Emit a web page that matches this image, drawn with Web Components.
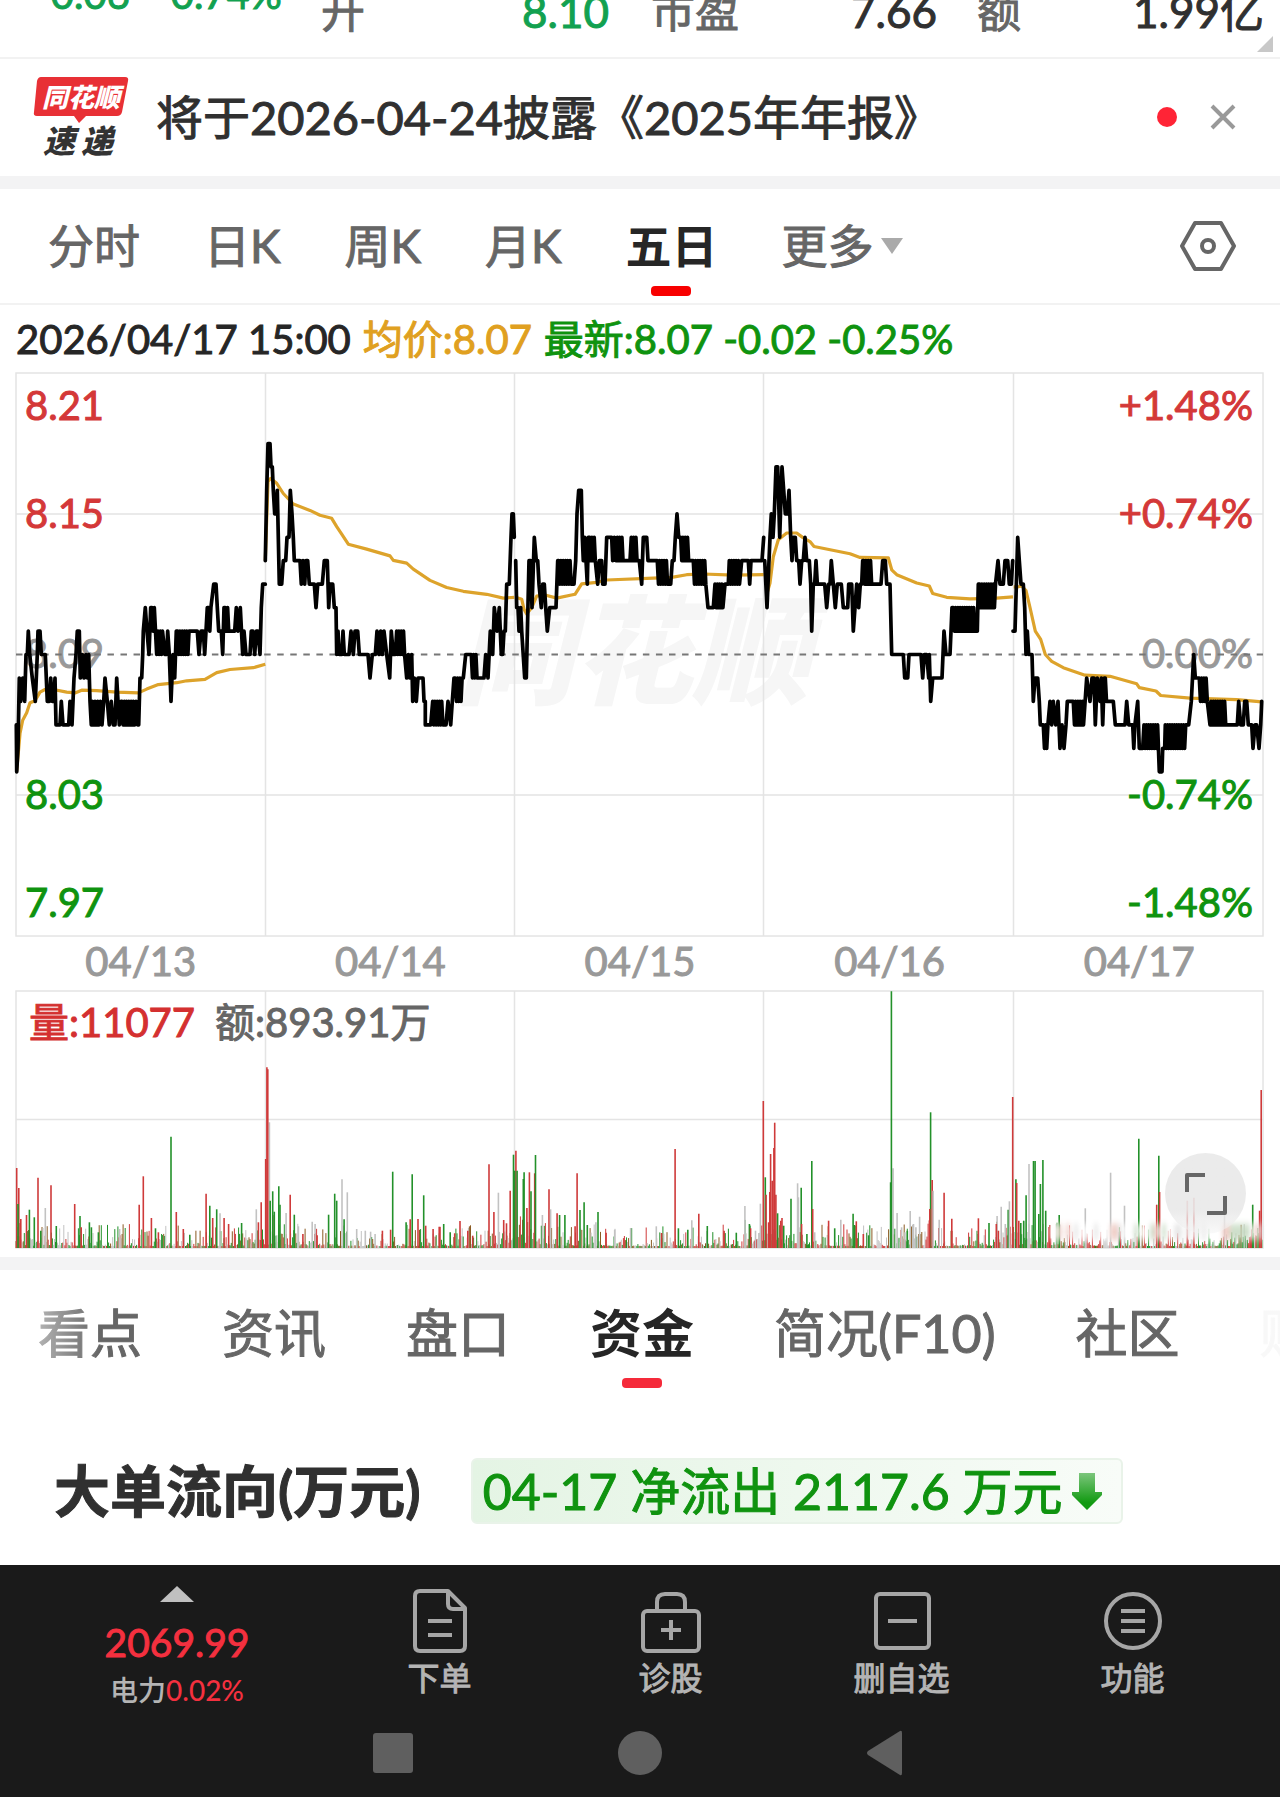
<!DOCTYPE html>
<html lang="zh-CN">
<head>
<meta charset="utf-8">
<meta name="viewport" content="width=device-width, initial-scale=1">
<title>五日 行情</title>
<style>
  html, body { margin: 0; background: #fff; }
  body { font-family: Lato, "Noto Sans CJK SC", sans-serif; font-weight: 400; -webkit-text-stroke-width: 1px; color: #303030; overflow-x: hidden; }
</style>
</head>
<body>
<stock-page></stock-page>

<script>
const define = (name, html, setup) => customElements.define(name, class extends HTMLElement {
  constructor() {
    super();
    const t = document.createElement('template');
    t.innerHTML = html;
    this.attachShadow({ mode: 'open' }).appendChild(t.content.cloneNode(true));
  }
  connectedCallback() { if (setup) setup(this, this.shadowRoot); }
});

const BASE = `*{box-sizing:border-box} button{font:inherit;color:inherit;background:none;border:0;padding:0;margin:0;white-space:nowrap;cursor:pointer} svg{display:block}`;

/* ---------- quote strip, scrolled partly out of view ---------- */
define('quote-strip', `<style>${BASE}
:host{display:block;height:57px;overflow:hidden;border-bottom:2px solid #f2f2f2;position:relative}
.row{display:flex;align-items:baseline;margin-top:-19px;height:60px;line-height:60px;font-size:44px;padding:0 16px 0 36px;white-space:nowrap}
.chg{font-size:40px;color:#12a150;display:flex;gap:26px;width:285px;margin-top:-17px;align-self:flex-start}
.cell{display:flex;justify-content:space-between}
.k{color:#666}.g{color:#12a150}
.a{width:288px}.b{width:286px;margin-left:42px}.c{flex:1;margin-left:40px}
svg{position:absolute;right:7px;top:36px}
</style>
<div class="row"><div class="chg"><span>-0.06</span><span>-0.74%</span></div>
<div class="cell a"><span class="k">开</span><span class="g">8.10</span></div>
<div class="cell b"><span class="k">市盈</span><span>7.66</span></div>
<div class="cell c"><span class="k">额</span><span>1.99亿</span></div></div>
<svg width="16" height="16" aria-hidden="true"><path d="M16 0V16H0Z" fill="#c8c8c8"/></svg>`);

/* ---------- news line ---------- */
define('news-line', `<style>${BASE}
:host{display:flex;align-items:center;height:115px;padding:0 43px 2px 32px;font-size:47px;line-height:60px;color:#303030}
.t{margin-left:26px;flex:1;white-space:nowrap}
.logo{-webkit-text-stroke-width:0}
.dot{width:20px;height:20px;border-radius:50%;background:#ff2436;margin-right:32px}
</style>
<svg class="logo" width="98" height="82" viewBox="0 0 98 82" role="img" aria-label="同花顺速递">
<path d="M9 1H93Q97 1 96 5L90 36Q89 40 85 40H54L47 47L42 40H5Q1 40 2 36L5 5Q6 1 9 1Z" fill="#e83035"/>
<text x="10" y="31" font-family="Noto Sans CJK SC" font-size="26" font-weight="900" font-style="italic" fill="#fff">同花顺</text>
<text y="77" font-family="Noto Sans CJK SC" font-size="32" font-weight="900" font-style="italic" fill="#333"><tspan x="11">速</tspan><tspan x="49">递</tspan></text>
</svg>
<span class="t"><slot></slot></span><span class="dot"></span>
<button aria-label="关闭"><svg width="28" height="28" viewBox="0 0 28 28"><path d="M3 3L25 25M25 3L3 25" stroke="#999" stroke-width="4"/></svg></button>`);

/* ---------- period tabs ---------- */
define('period-tabs', `<style>${BASE}
:host{display:flex;align-items:center;height:114px;padding:0 44px 0 48px;border-bottom:2px solid #f2f2f2;color:#666;font-size:46px;line-height:60px}
nav{display:flex;gap:64px;flex:1}
button{position:relative;display:flex;align-items:center;gap:8px}
.on{color:#262626;font-weight:700;-webkit-text-stroke-width:0}
.on::after{content:"";position:absolute;left:calc(50% - 20px);top:70px;width:40px;height:10px;border-radius:4px;background:#f80000}
</style>
<nav><button>分时</button><button>日K</button><button>周K</button><button>月K</button><button class="on" aria-current="true">五日</button>
<button>更多<svg width="22" height="16"><path d="M0 0H22L11 16Z" fill="#aaa"/></svg></button></nav>
<button aria-label="设置"><svg width="56" height="50" viewBox="0 0 56 50" fill="none" stroke="#666" stroke-width="4" stroke-linejoin="round"><path d="M15 2H41L54 25L41 48H15L2 25Z"/><circle cx="28" cy="25" r="6"/></svg></button>`);

/* ---------- cursor readout ---------- */
define('cursor-readout', `<style>${BASE}
:host{display:flex;gap:12px;align-items:center;height:68px;padding:0 16px;font-size:40px;line-height:58px;white-space:nowrap;color:#262626}
.y{color:#e0a020}.g{color:#0f930f}
</style>
<span>2026/04/17 15:00</span><span class="y">均价:8.07</span><span class="g">最新:8.07 -0.02 -0.25%</span>`);

/* ---------- price chart ----------
   Each day: "x,level" pairs; level is cents away from the previous close.
   "z a b lo hi" is a stretch that flips between two levels. x is in thirds of a pixel. */
const DAYS = [
`49,-3 50,-5 54,-4 58,-1 62,-2 68,-1 74,-2 78,0 82,0 85,1 89,0 97,-1 106,-2 112,0 114,1 120,1 124,0 136,0 142,-2 148,-2 152,-1 157,-2 161,-2 165,-1 168,-3 180,-3 184,-2 189,-3 206,-3 210,-2 216,-3 222,-1 228,0 232,1 238,1 241,-1 247,0 252,-1 258,0 262,-1 266,0 270,-2 274,-3 277,-2 281,-3 285,-2 289,-3 293,-2 297,-3 301,-2 306,-3 311,-2 315,-1 322,-2 328,-3 334,-2 340,-3 345,-3 350,-1 358,-3 363,-2 z:366:400:-3:-2 404,-3 408,-2 413,-3 416,-3 420,-1 425,-1 428,0 430,1 436,2 441,1 447,0 452,2 z:456:466:1:2 470,0 z:474:490:0:1 495,0 500,0 503,1 508,0 513,-2 519,0 524,-1 529,1 z:533:570:0:1 574,1 592,1 597,0 603,1 610,1 614,0 622,2 z:626:636:1:2 641,3 648,3 652,2 656,1 664,1 668,0 672,2 z:676:688:1:2 692,1 704,1 709,2 714,1 721,2 728,0 732,1 738,0 750,0 754,1 759,1 764,0 769,1 774,1 780,0 784,2 788,3 796,3`,
`796,4 800,7 804,9 810,9 813,8 817,8 820,7 824,6 828,6 832,7 838,3 845,3 850,4 857,4 861,5 867,5 871,7 876,6 880,5 883,4 900,4 904,3 909,4 914,3 918,4 923,4 928,3 943,3 948,2 953,3 967,3 973,4 982,4 986,2 990,3 998,3 1003,2 1008,2 1010,0 1014,1 1018,0 1026,0 1029,1 1033,0 1047,0 1053,1 1060,0 1065,1 1073,1 1078,0 1104,0 1110,-1 1117,0 1126,0 1131,1 1137,0 1142,1 1147,0 1152,1 1160,0 1169,-1 1174,1 1180,0 1186,0 z:1190:1214:0:1 1220,-1 1225,0 1229,-1 1235,0 1238,-2 1243,-1 1249,-2 1254,-1 1269,-1 1272,-2 1276,-2 1276,-3 1292,-3 z:1298:1330:-3:-2 1338,-3 1344,-2 1352,-3 1357,-2 1362,-1 z:1366:1388:-2:-1 1390,-1 1397,0 1410,0 z:1414:1432:-1:0 1436,-1 1452,-1 1457,0 1464,-1 1471,1 1478,0 1483,2 1491,1 1498,2 1504,0 1508,0 1512,1 1516,1 1520,3 1528,3 1533,5 1536,6 1540,6 1543,5`,
`1547,4 1550,2 1554,2 1557,1 1562,2 1565,1 1574,-1 1579,-1 1587,4 1592,4 1596,2 1603,5 1609,4 1613,4 1617,3 1624,2 1628,3 1633,3 1637,2 1642,1 1649,2 1668,2 1673,4 z:1676:1714:3:4 1722,3 1727,4 1731,6 1736,7 1744,7 1747,5 1750,4 1754,5 1758,4 1762,3 1765,5 z:1769:1788:4:5 1793,3 1798,4 1805,4 1808,3 1815,3 1820,5 1835,5 1838,4 1843,5 1848,4 z:1852:1870:4:5 1875,4 1890,4 z:1894:1914:4:5 1918,4 1925,3 1930,5 1940,5 1944,4 1968,4 z:1972:2004:3:4 2012,3 2017,4 2022,4 2026,5 2031,6 2036,5 z:2042:2068:4:5 2075,4 z:2080:2118:3:4 2124,2 2140,2 z:2145:2170:2:3 2175,3 2185,3 z:2188:2220:3:4 2225,4 2245,4 2249,3 2253,4 2286,4 2291,5`,
`2294,4 2301,2 2310,5 2314,6 2319,5 2323,6 2328,8 2333,8 2339,5 2346,8 2351,7 2356,6 2362,6 2367,7 2372,5 2376,4 2380,5 2386,5 2390,4 2396,4 2400,3 2405,4 2410,4 2415,5 2420,4 2428,4 2432,3 2435,1 2440,3 2444,3 2448,4 2452,3 2474,3 2480,2 2486,3 2490,3 2494,4 2500,3 2506,2 2512,3 2518,3 2524,3 2530,2 2543,2 2546,3 2555,3 2560,1 2565,2 2570,3 2576,2 2581,3 2585,3 2588,4 z:2591:2616:3:4 2625,3 2643,3 2648,4 2656,4 2660,3 2670,3 2675,0 2710,0 2714,-1 2723,-1 2727,0 2763,0 2768,-1 2773,0 2780,0 2786,-1 2788,0 2792,-2 2798,-1 2826,-1 2832,1 2838,0 2850,0 2856,2 z:2860:2928:1:2 2932,1 2935,3 z:2939:2990:2:3 2994,4 3000,3 3010,3 3015,4 3023,4 3028,3 3034,3 3038,4`,
`3039,1 3045,1 3053,5 3058,4 3063,3 3070,3 3074,2 3078,0 3082,1 3086,0 3096,0 3100,-2 3105,-1 3113,-1 3118,-2 3121,-3 3126,-3 z:3130:3146:-4:-3 3150,-2 3155,-3 3160,-2 3167,-3 3174,-2 3180,-4 3186,-3 3192,-4 3198,-3 3202,-2 3217,-2 z:3220:3254:-3:-2 3260,-1 3270,-2 3276,-1 3282,-1 3286,-3 3292,-1 3300,-2 3304,-1 3308,-3 3313,-1 z:3316:3322:-2:-1 3326,-2 3340,-2 3346,-3 3375,-3 3380,-2 3386,-3 3395,-3 z:3398:3408:-4:-3 3413,-2 3418,-4 3428,-4 z:3432:3474:-4:-3 3478,-5 3486,-5 3488,-4 3494,-4 z:3496:3560:-4:-3 3566,-3 3574,-2 3581,0 3586,-1 3595,-1 z:3598:3624:-2:-1 3630,-3 z:3633:3678:-3:-2 3684,-3 3712,-3 3716,-2 3722,-3 3730,-3 3734,-2 3740,-2 3745,-3 3755,-3 3759,-4 3765,-3 3770,-3 3777,-4 3782,-3 3785,-2`];
const AVGS = [
'50,1090 60,990 68,955 80,935 90,908 105,903 120,880 135,873 160,873 200,880 225,882 245,875 290,876 350,880 415,882 440,872 475,860 530,855 560,850 615,846 650,828 690,820 760,815 796,806',
'796,530 804,320 812,312 830,325 850,352 880,380 930,397 960,410 995,418 1010,440 1025,460 1045,487 1100,500 1170,518 1180,530 1220,537 1240,553 1260,565 1290,583 1340,602 1390,612 1460,620 1510,630 1543,628',
'1547,628 1565,633 1572,660 1580,672 1595,655 1610,625 1635,622 1670,630 1725,620 1745,592 1790,588 1820,582 1960,577 2015,575 2060,568 2110,566 2200,569 2291,568',
'2300,620 2310,590 2320,520 2335,475 2360,457 2390,457 2410,470 2430,480 2442,493 2550,512 2580,522 2665,523 2675,555 2690,568 2750,590 2788,598 2798,618 2840,628 2910,632 2980,631 3039,627',
'3041,600 3055,600 3065,598 3078,610 3090,655 3106,718 3122,740 3136,780 3155,798 3190,815 3255,835 3330,838 3410,858 3418,868 3468,877 3482,889 3570,896 3710,900 3785,906'];
const r1 = v => Math.round(v * 10) / 10;
const pricePath = s => {
  const pts = [];
  for (const tok of s.split(' ')) {
    if (tok[0] === 'z') {
      const [, a, b, lo, hi] = tok.split(':').map(Number);
      let up = true;
      for (let x = a; x <= b; x += 3.4) { pts.push([x, up ? hi : lo]); up = !up; }
    } else pts.push(tok.split(',').map(Number));
  }
  return pts.map(([x, n]) => r1(x / 3 - 16) + ',' + r1(281.5 - 23.45 * n)).join(' ');
};
const avgPath = s => s.split(' ').map(p => { const [x, y] = p.split(',').map(Number); return r1(x / 3 - 16) + ',' + r1(y / 2.6576 - 12); }).join(' ');
const vlines = h => [249, 498, 747, 997].map(x => `<path d="M${x + .5} 0V${h}"/>`).join('');

define('price-chart', `<style>${BASE}
:host{display:block;padding:0 16px} svg{width:100%;height:auto;overflow:visible}
.l{font-size:40px}
.up{fill:#d43838;stroke:#d43838}.dn{fill:#0f930f;stroke:#0f930f}.eq{fill:#999;stroke:#999}.l{stroke-width:1px}.e{text-anchor:end}
.wm{font:italic 900 118px "Noto Sans CJK SC";fill:#f6f6f6;-webkit-text-stroke-width:0}
</style><svg viewBox="0 0 1248 564" role="img" aria-label="五日价格走势"></svg>`, (h, root) => {
  const lab = (y, a, b, c) => `<text class="l ${c}" x="9" y="${y}">${a}</text><text class="l ${c} e" x="1237" y="${y}">${b}</text>`;
  root.querySelector('svg').innerHTML =
  `<text class="wm" x="440" y="322">同花顺</text>
   <g fill="none" stroke="#e4e4e4" stroke-width="1.500"><rect x="0" y="0" width="1247" height="563"/><path d="M0 141H1247M0 422H1247"/>${vlines(563)}</g>
   ${lab(47, '8.21', '+1.48%', 'up')}${lab(155, '8.15', '+0.74%', 'up')}${lab(295, '8.09', '0.00%', 'eq')}${lab(436, '8.03', '-0.74%', 'dn')}${lab(544, '7.97', '-1.48%', 'dn')}
   <path d="M0 281.5H1247" stroke="#777" stroke-width="2" stroke-dasharray="6.500 6.560"/>
   <g fill="none" stroke="#dda32b" stroke-width="3.200" stroke-linejoin="round">${AVGS.map(s => `<polyline points="${avgPath(s)}"/>`).join('')}</g>
   <g fill="none" stroke="#000" stroke-width="3.700" stroke-linejoin="round" stroke-linecap="round">${DAYS.map(s => `<polyline points="${pricePath(s)}"/>`).join('')}</g>`;
});

define('date-axis', `<style>${BASE}
:host{display:flex;padding:0 16px;height:54px;line-height:48px;font-size:40px;color:#999}
span{flex:1;text-align:center}</style>
<span>04/13</span><span>04/14</span><span>04/15</span><span>04/16</span><span>04/17</span>`);

/* ---------- volume chart: colour, x (in 1/2.45 px), top (in thirds of a pixel, floor 952) ---------- */
const VOL = `r41,712 r46,772 g44,820 r51,865 g72,837 r65,853 g84,860 r93,741 r125,764 n111,832 g100,900 g138,886 r183,820 g196,856 r199,890 g219,875 g224,890 g241,905 n293,895 r341,822 r351,737 r371,862 g419,618 r432,844 g381,893 r388,905 r449,895 g465,912 r505,789 g514,825 r521,862 g531,836 n539,848 r549,862 r560,880 g592,877 n628,836 r640,815 r633,875 n660,575 r651,685 r654,410 r656,416 g662,810 g668,782 g672,843 g683,767 g686,822 n701,847 r711,792 g721,852 n731,887 n765,873 n772,880 r742,910 r777,914 g805,852 g820,789 g825,810 n838,746 g843,866 n851,785 n874,895 n895,900 n908,903 n919,910 r937,900 r957,897 g962,723 g995,875 r1005,866 g1010,731 r1024,865 g1038,794 r1043,885 r1061,895 r1076,888 g1087,880 g1103,905 r1114,908 r1127,871 r1146,900 r1158,915 r1198,701 r1210,844 n1221,786 r1234,868 r1241,878 r1250,780 g1258,672 r1264,660 g1261,720 g1267,720 g1282,745 g1284,725 r1291,832 r1297,725 g1301,782 r1310,728 g1312,673 g1327,885 n1329,853 r1345,776 n1349,836 r1365,848 g1371,853 g1384,853 r1414,728 r1409,887 g1421,838 g1431,815 g1439,883 g1465,844 n1460,875 r1485,906 n1506,897 n1545,892 n1608,887 r1621,907 r1654,655 g1662,893 n1695,869 r1712,849 g1685,897 g1733,886 r1774,900 g1804,906 n1825,826 g1836,880 r1839,893 n1851,900 n1863,819 r1870,511 g1875,740 r1877,792 r1883,875 r1886,784 r1888,670 r1892,750 r1896,652 r1898,576 r1901,792 g1905,848 r1913,870 r1916,862 g1920,885 g1938,804 n1954,758 n1956,800 g1963,771 r1964,880 g1977,910 g1989,691 r1991,835 n1996,905 r2030,870 g2045,893 n2060,867 g2090,849 g2093,883 r2098,872 r2115,910 g2128,914 n2188,713 g2184,182 g2182,755 n2198,847 n2230,841 n2209,890 n2217,905 n2238,880 n2244,890 n2253,858 g2223,900 g2280,545 r2278,835 r2284,748 n2286,780 n2301,867 r2313,786 r2332,864 r2397,863 g2423,877 n2443,856 r2441,880 r2446,900 n2453,828 n2463,880 g2470,837 n2473,812 r2481,499 g2489,746 r2491,757 r2496,870 g2501,877 g2508,870 g2514,794 n2521,700 g2532,691 g2536,691 g2545,850 g2549,760 g2555,688 g2562,840 r2572,883 g2595,853 n2659,833 n2721,726 n2755,825 g2790,624 g2839,675 r2841,784 r2834,822 r2909,810 r2925,801 g3069,822 r3086,840 r3090,478 n3000,850`;
define('volume-chart', `<style>${BASE}
:host{display:block;padding:0 16px;position:relative} svg.c{width:100%;height:auto;overflow:visible}
text{font-size:40px;stroke-width:1px}
button{position:absolute;right:34px;bottom:14px;width:81px;height:81px;border-radius:50%;background:linear-gradient(#e9e9e9e8 70%,#f4f4f480);display:flex;align-items:center;justify-content:center}
</style><svg class="c" viewBox="0 0 1248 257" role="img" aria-label="五日成交量"></svg>
<button aria-label="全屏"><svg width="42" height="42" viewBox="0 0 42 42" fill="none" stroke="#666" stroke-width="4" stroke-linejoin="round"><path d="M2 19V2H20M40 23V40H22"/></svg></button>`, (h, root) => {
  const C = { r: '#cf3a3a', g: '#23912a', n: '#c2c2c2', b: '#8a5a22' };
  let seed = 17;
  const rnd = () => (seed = (seed * 16807) % 2147483647) / 2147483647;
  const bars = VOL.split(' ').map(t => { const [x, y] = t.slice(1).split(',').map(Number); return [t[0], x / 2.45 - 16, (952 - y) / 3]; });
  let out = '';
  for (let x = 0; x < 1246; x += 1.04) {
    const d = (x % 249.3) / 249.3;
    const crowd = Math.exp(-d * 14) * 26 + (x > 1215 ? 6 : 0) + (x > 880 && x < 915 ? 14 : 0) + (d > .92 ? 10 : 0);
    const v = 2 + Math.pow(rnd(), 4) * 22 + crowd * rnd() * .8;
    const k = rnd(), c = k < .3 ? 'n' : k < .55 ? 'r' : k < .8 ? 'g' : 'b';
    out += `<path stroke="${C[c]}" d="M${r1(x)} 257v${-r1(v)}"/>`;
  }
  for (const [c, x, v] of bars) out += `<path stroke="${C[c]}" stroke-width="1.600" d="M${r1(x)} 257v${-r1(v)}"/>`;
  let haze = '';
  for (let x = 1034; x < 1246; x += 4) {
    const k = rnd();
    haze += `<rect x="${x}" y="233" width="4" height="16" fill="${k < .5 ? '#fff' : k < .66 ? '#ecc4bc' : k < .84 ? '#c2d8be' : '#e2e2e2'}"/>`;
  }
  root.querySelector('svg').innerHTML =
  `<defs><filter id="b" x="-5%" width="110%" y="-50%" height="200%"><feGaussianBlur stdDeviation="2 3"/></filter></defs>
   <g fill="none" stroke="#e4e4e4" stroke-width="1.500"><rect x="0" y="0" width="1247" height="257"/><path d="M0 128.500H1247"/>${vlines(257)}</g>
   <g stroke-width="1">${out}</g><g filter="url(#b)" opacity=".8">${haze}</g>
   <text x="13" y="46" fill="#d43030" stroke="#d43030">量:11077</text><text x="199" y="46" fill="#666" stroke="#666">额:893.91万</text>`;
});

/* ---------- section tabs ---------- */
define('section-tabs', `<style>${BASE}
:host{display:block;overflow:hidden;height:157px;color:#666;font-size:52px;line-height:70px;position:relative}
nav{display:flex;gap:80px;padding:28px 0 0 38px}
button{position:relative;flex:none}
.on{color:#262626;font-weight:700;-webkit-text-stroke-width:0}
.on::after{content:"";position:absolute;left:calc(50% - 20px);top:80px;width:40px;height:10px;border-radius:4px;background:#f52a3a}
:host::before,:host::after{content:"";position:absolute;z-index:1;top:0;height:110px;pointer-events:none}
:host::before{left:0;width:100px;background:linear-gradient(90deg,#ffffff90 30%,#fff0)}
:host::after{right:0;width:70px;background:linear-gradient(270deg,#fffffff4 50%,#fff0)}
</style>
<nav><button>看点</button><button>资讯</button><button>盘口</button><button class="on" aria-current="true">资金</button><button>简况(F10)</button><button>社区</button><button>财务</button></nav>`);

/* ---------- flow heading ---------- */
define('flow-heading', `<style>${BASE}
:host{display:flex;align-items:center;gap:50px;height:127px;padding:0 54px 11px;white-space:nowrap}
h2{margin:0;font-size:56px;line-height:72px;font-weight:700;color:#303030}
.badge{display:flex;align-items:center;gap:8px;height:66px;padding:0 18px 0 10px;border:2px solid #e9f3e9;border-radius:6px;background:linear-gradient(90deg,#e4f4e4,#f8fcf8);color:#0f930f;font-size:50px;line-height:62px}
</style>
<h2>大单流向(万元)</h2>
<div class="badge"><span>04-17 净流出 2117.6 万元</span>
<svg width="32" height="38" viewBox="0 0 32 38" aria-hidden="true"><defs><linearGradient id="g" x2="0" y2="1"><stop offset="0" stop-color="#7cc67c"/><stop offset=".8" stop-color="#129a12"/></linearGradient></defs><path d="M8 1H24V20H31V23L16 38L1 23V20H8Z" fill="url(#g)"/></svg></div>`);

/* ---------- bottom bar ---------- */
define('tool-button', `<style>${BASE}
:host{display:block;flex:1}
button{display:flex;flex-direction:column;align-items:center;width:100%;font-size:32px;line-height:44px;color:#b4b4b4;gap:2px}
</style><button><slot name="icon"></slot><slot></slot></button>`);

define('bottom-bar', `<style>${BASE}
:host{display:block;background:#1a1a1a;color:#b4b4b4;height:233px}
.row{display:flex;align-items:flex-start;height:144px;padding:21px 32px 0 62px}
.idx{width:230px;margin-right:32px;display:flex;flex-direction:column;align-items:center;gap:16px;font-size:39px;line-height:48px;color:#f4303f}
.num{display:flex;flex-direction:column}
small{font-size:28px;line-height:48px;color:#b4b4b4;font-weight:500;-webkit-text-stroke-width:0}b{font-weight:inherit;color:#f4303f}
.ic{fill:none;stroke:#a6a6a6;stroke-width:4;stroke-linejoin:round}
.sys{display:flex;justify-content:space-between;align-items:center;height:88px;padding:0 378px 0 373px}
</style>
<div class="row">
<button class="idx"><svg width="34" height="16"><path d="M17 0L34 16H0Z" fill="#c0c0c0"/></svg><span class="num"><span>2069.99</span><small>电力<b>0.02%</b></small></span></button>
<tool-button><svg slot="icon" class="ic" width="64" height="68" viewBox="0 0 64 68"><path d="M40 5H12Q7 5 7 10V60Q7 65 12 65H52Q57 65 57 60V22L40 5ZM40 6V18Q40 23 45 23H56M20 35H44M20 49H44"/></svg>下单</tool-button>
<tool-button><svg slot="icon" class="ic" width="64" height="68" viewBox="0 0 64 68"><rect x="4" y="25" width="56" height="40" rx="4"/><path d="M18 25V16Q18 8 26 8H38Q46 8 46 16V25M32 34V54M22 44H42"/></svg>诊股</tool-button>
<tool-button><svg slot="icon" class="ic" width="64" height="68" viewBox="0 0 64 68"><rect x="6" y="8" width="53" height="54" rx="4"/><path d="M18 35H47"/></svg>删自选</tool-button>
<tool-button><svg slot="icon" class="ic" width="64" height="68" viewBox="0 0 64 68"><circle cx="32" cy="35" r="27"/><path d="M20 25H44M20 35H44M20 45H44"/></svg>功能</tool-button>
</div>
<div class="sys">
<button aria-label="最近任务"><svg width="40" height="40"><rect width="40" height="40" rx="3" fill="#5f5f5f"/></svg></button>
<button aria-label="主屏幕"><svg width="44" height="44"><circle cx="22" cy="22" r="22" fill="#5f5f5f"/></svg></button>
<button aria-label="返回"><svg width="36" height="46"><path d="M34 1Q36 0 36 3V43Q36 46 34 45L2 25Q0 23 2 21Z" fill="#5f5f5f"/></svg></button>
</div>`);

define('stock-page', `<style>
:host{display:block}
.band{height:13px;background:#f3f3f4}
volume-chart{margin-bottom:9px}
</style>
<quote-strip></quote-strip>
<news-line>将于2026-04-24披露《2025年年报》</news-line>
<div class="band"></div>
<period-tabs></period-tabs>
<cursor-readout></cursor-readout>
<price-chart></price-chart>
<date-axis></date-axis>
<volume-chart></volume-chart>
<div class="band"></div>
<section-tabs></section-tabs>
<flow-heading></flow-heading>
<bottom-bar></bottom-bar>`);
</script>
</body>
</html>
